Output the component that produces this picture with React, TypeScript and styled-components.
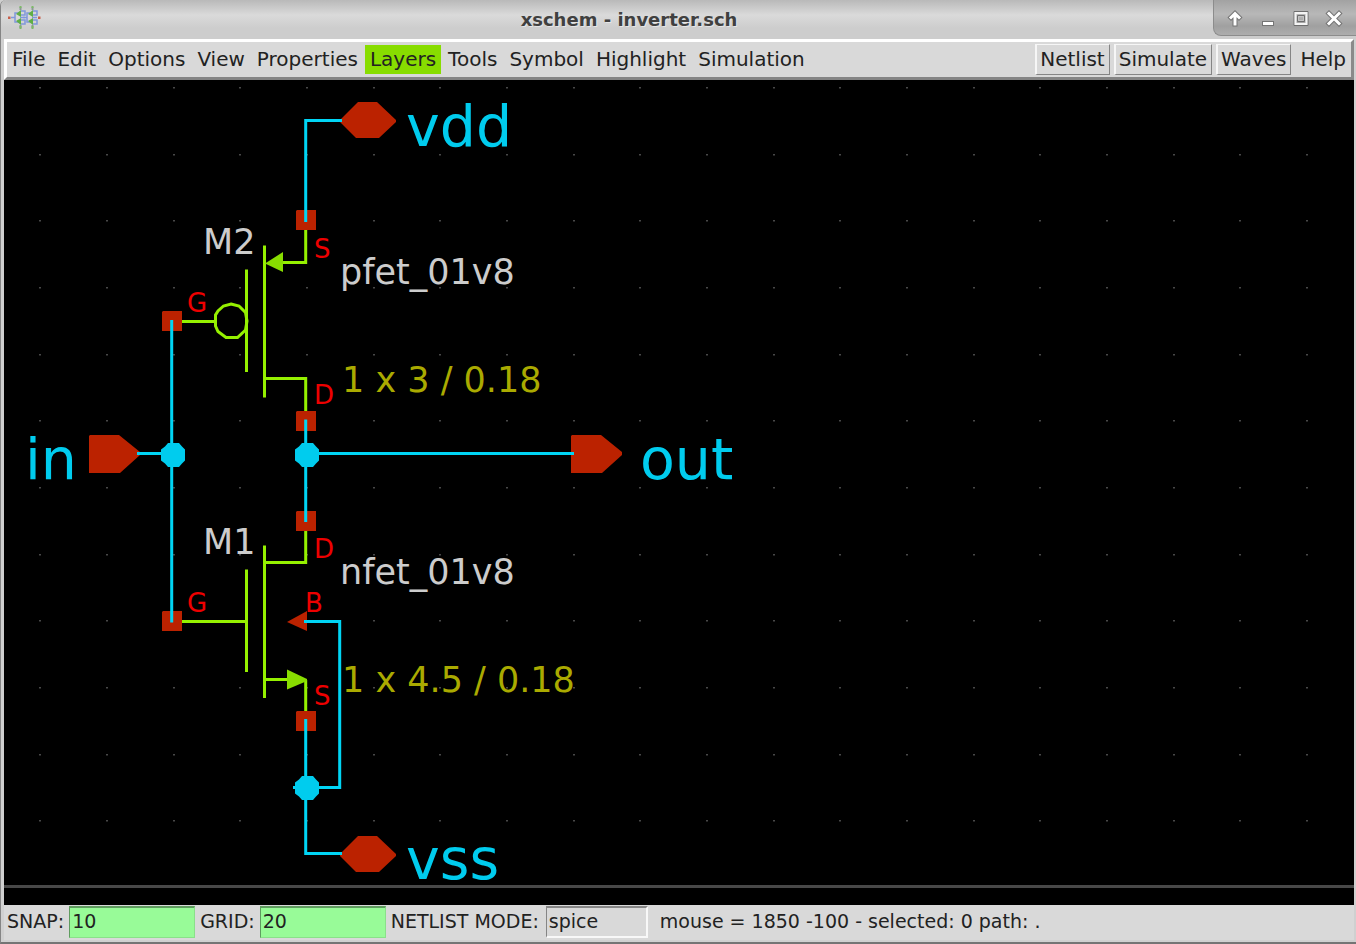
import React from "react";
import styled, { createGlobalStyle } from "styled-components";

const GlobalStyle = createGlobalStyle`
  * { box-sizing: border-box; }
  body {
    margin: 0;
    background: #cfcfcf;
    font-family: "DejaVu Sans", Verdana, sans-serif;
    font-size: 19px;
    line-height: 24px;
    color: #222;
  }
`;

const Window = styled.div`
  display: flex;
  flex-direction: column;
  min-height: 100vh;
  background: #d0d0d0;
  border-bottom: 2px solid #747474;
  border-left: 1px solid #858585;
  border-top-left-radius: 6px;
`;

const TitleBar = styled.header`
  display: grid;
  grid-template-columns: 44px 1fr 143px;
  height: 39px;
  border-top-left-radius: 6px;
  background: linear-gradient(#b9b9b9 0, #dadada 15px, #cdcdcd 28px, #cdcdcd 39px);
`;

const AppIcon = styled.svg`
  margin: 5px 0 0 6px;
`;

const Title = styled.h1`
  margin: 0;
  text-align: center;
  font-size: 18px;
  font-weight: bold;
  line-height: 40px;
  color: #404040;
  text-shadow: 1px 1px 0 #e6e6e6;
`;

const WindowButtons = styled.div`
  display: flex;
  align-items: center;
  gap: 1px;
  height: 36px;
  padding-left: 5px;
  border: solid #8c8c8c;
  border-width: 0 0 1px 1px;
  border-bottom-left-radius: 8px;
  background: linear-gradient(#a2a2a2, #b8b8b8 14px, #a0a0a0 26px, #adadad);
`;

const WindowButton = styled.button`
  display: flex;
  justify-content: center;
  align-items: center;
  width: 32px;
  height: 34px;
  padding: 0;
  border: 0;
  background: none;
`;

const Content = styled.div`
  flex: 1;
  display: flex;
  flex-direction: column;
  margin: 0 2px 2px 3px;
  background: #d9d9d9;
`;

const MenuBar = styled.nav`
  display: flex;
  align-items: center;
  gap: 2px;
  height: 41px;
  border: 3px solid;
  border-color: #fff #8a8a8a #858585 #fff;
  font-size: 20px;
`;

const MenuButton = styled.button<{ $active?: boolean }>`
  height: 29px;
  padding: 0 5px;
  border: 0;
  font: inherit;
  line-height: 27px;
  color: inherit;
  background: ${(p) => (p.$active ? "#88dd00" : "transparent")};
`;

const Actions = styled.div`
  display: flex;
  align-items: center;
  gap: 4px;
  margin-left: auto;
`;

const ActionButton = styled.button`
  height: 31px;
  padding: 0 4px 2px 3px;
  border: solid;
  border-color: #f6f6f6 #858585 #858585 #f6f6f6;
  border-width: 1px 1px 1px 2px;
  font: inherit;
  line-height: 26px;
  color: inherit;
  background: #d9d9d9;
`;

const Canvas = styled.main`
  flex: 1;
  display: flex;
  flex-direction: column;
  min-height: 600px;
  padding-bottom: 17px;
  background: #000;
`;

const Drawing = styled.svg`
  flex: 1;
  width: 100%;
  min-height: 0;
  overflow: visible;
  border-bottom: 3px solid #484848;
`;

const StatusBar = styled.footer`
  display: flex;
  align-items: center;
  height: 35px;
  padding: 0 0 1px 3px;
  line-height: 30px;
  white-space: nowrap;
`;

const StatusLabel = styled.label`
  margin-right: 5px;
  padding-bottom: 2px;
`;

const StatusText = styled.span`
  padding-bottom: 2px;
`;

const StatusInput = styled.input<{ $wide?: boolean }>`
  width: ${(p) => (p.$wide ? 126 : 102)}px;
  height: 32px;
  margin: ${(p) => (p.$wide ? "0 5px 0 0" : "0 12px 0 2px")};
  padding: ${(p) => (p.$wide ? "0 2px 4px" : "0 2px 2px")};
  border: solid;
  border-color: ${(p) =>
    p.$wide ? "#5f9c5f #8ae08a #8ae08a #5f9c5f" : "#858585 #f8f8f8 #f8f8f8 #858585"};
  border-width: ${(p) => (p.$wide ? "2px 1px 1px 1px" : "2px 2px 2px 1px")};
  border-radius: 0;
  font: inherit;
  line-height: 24px;
  color: inherit;
  background: ${(p) => (p.$wide ? "#98fb98" : "#d9d9d9")};
  outline: 0;
`;

const Wire = styled.path`
  fill: none;
  stroke: #00d5f5;
  stroke-width: 3px;
`;

const Device = styled.path`
  fill: none;
  stroke: #95f000;
  stroke-width: 3px;
`;

const DeviceFill = styled.path`
  fill: #88dd00;
`;

const PinFill = styled.path`
  fill: #bb2200;
`;

const NetLabel = styled.text`
  font-size: 57px;
  fill: #00ccee;
`;

const DeviceLabel = styled.text`
  font-size: 35px;
  fill: #cccccc;
`;

const SizeLabel = styled(DeviceLabel)`
  fill: #aaaa00;
`;

const TerminalLabel = styled.text`
  font-size: 26px;
  fill: #ee0000;
`;

const menus = ["File", "Edit", "Options", "View", "Properties", "Layers", "Tools", "Symbol", "Highlight", "Simulation"];
const actions = ["Netlist", "Simulate", "Waves"];

const GRID_STEP = 66.67;

const GridDots = () => (
  <g fill="#484848">
    {Array.from({ length: 12 }, (_, row) =>
      Array.from({ length: 20 }, (_, col) => (
        <rect
          key={`${row}-${col}`}
          x={Math.round(39.4 + col * GRID_STEP)}
          y={Math.round(87 + row * GRID_STEP)}
          width="2"
          height="1.5"
        />
      ))
    )}
  </g>
);

const Terminal = ({ x, y }: { x: number; y: number }) => (
  <PinFill d={`M${x - 9} ${y - 10}h19v20h-20v-19z`} />
);

const Junction = ({ x, y }: { x: number; y: number }) => (
  <path
    fill="#00ccee"
    d={`M${x - 5} ${y - 12}h11l3 3.500l3 3v11l-3 3l-3 3.500h-11l-3 -3.500l-4 -3v-11l4 -3z`}
  />
);

const PowerPin = ({ y }: { y: number }) => (
  <PinFill d={`M340 ${y - 1}L358 ${y - 19}H377L396 ${y - 1}V${y + 1}L379 ${y + 17}H356L340 ${y + 1}z`} />
);

const SignalPin = ({ x }: { x: number }) => (
  <PinFill d={`M${x} 436l1 -1h29l21 17v3l-20 18h-31z`} />
);

const Schematic = () => (
  <Drawing role="img" aria-label="Inverter schematic">
    <g transform="translate(-4 -80)">
      <GridDots />

      <Device d="M305.7 230V262.5H283M264.5 245.5V397.5M246.5 269.5V372M182 321.5H215M264.5 378.5H305.7V411" />
      <Device d="M231 304L239 306L245.500 312.500L247 321L245.500 330L237.500 337.500H226L218 331.500L215.500 326V315L218 311L223.500 306z" />
      <DeviceFill d="M265 263.500L283 252V272z" />

      <Device d="M305.7 531V562.5H264.5M264.5 545.5V698M246.5 569.5V672M182 621.5H246.5M264.5 679.500H290M305.7 680V711" />
      <DeviceFill d="M287 669.500L307 679V681L287 689.500z" />

      <Terminal x={306} y={220} />
      <Terminal x={306} y={421} />
      <Terminal x={306} y={521} />
      <Terminal x={306} y={721} />
      <Terminal x={172} y={321} />
      <Terminal x={172} y={621} />
      <PowerPin y={121} />
      <PowerPin y={855} />
      <SignalPin x={89} />
      <SignalPin x={571} />
      <PinFill d="M287 622L307 611V631z" />

      <Wire d="M342 120.500H305.7V222M305.7 419.500V522M171.7 320V622.500M137 453.500H172M307 453.500H574M304 621.500H339.7V787.500H293M305.7 719V853.500H342" />
      <Junction x={173} y={455} />
      <Junction x={307} y={455} />
      <Junction x={307} y={788} />

      <NetLabel x="406" y="146">vdd</NetLabel>
      <NetLabel x="406" y="879">vss</NetLabel>
      <NetLabel x="25" y="479">in</NetLabel>
      <NetLabel x="640" y="479">out</NetLabel>

      <DeviceLabel x="203" y="254">M2</DeviceLabel>
      <DeviceLabel x="340" y="284">pfet_01v8</DeviceLabel>
      <SizeLabel x="342" y="392">1 x 3 / 0.18</SizeLabel>
      <DeviceLabel x="203" y="554">M1</DeviceLabel>
      <DeviceLabel x="340" y="584">nfet_01v8</DeviceLabel>
      <SizeLabel x="342" y="692">1 x 4.5 / 0.18</SizeLabel>

      <TerminalLabel x="314" y="258">S</TerminalLabel>
      <TerminalLabel x="187" y="312">G</TerminalLabel>
      <TerminalLabel x="314" y="404">D</TerminalLabel>
      <TerminalLabel x="314" y="558">D</TerminalLabel>
      <TerminalLabel x="187" y="612">G</TerminalLabel>
      <TerminalLabel x="305" y="612">B</TerminalLabel>
      <TerminalLabel x="314" y="705">S</TerminalLabel>
    </g>
  </Drawing>
);

const Logo = () => (
  <AppIcon width="34" height="26" viewBox="0 0 34 26" aria-hidden="true">
    {[0, 12].map((dx) => (
      <g key={dx} transform={`translate(${dx} 0)`} fill="none">
        <path stroke="#7f97dc" strokeWidth="1.500" d="M4 12.500H8M12 8H8V17H12M13 12.500H18M14 6H18V10H14M14 15H18V19H14" />
        <path stroke="#8a9a94" strokeWidth="2" d="M13.500 2V5M13.500 20V23" />
        <path stroke="#7dbb66" strokeWidth="2" d="M13.500 1V3M13.500 21V24" />
        <path fill="#5fae45" d="M9 9L14 5V12zM9 16L14 13V20z" />
      </g>
    ))}
    <path fill="#c8604c" d="M1 11.500h2.500v2.500h-2.500zM31 11.500h2.500v2.500h-2.500z" />
  </AppIcon>
);

const glyphs = [
  { name: "Shade", d: "M9 15V6M5 8.500L9 4.500L13 8.500" },
  { name: "Minimize", d: "M5.500 14.500H12.500" },
  { name: "Maximize", d: "" },
  { name: "Close", d: "M4 4.500L14 14.500M14 4.500L4 14.500" },
];

const Glyph = ({ name, d }: { name: string; d: string }) =>
  name === "Maximize" ? (
    <svg width="18" height="18" viewBox="0 0 18 18" fill="none" aria-hidden="true">
      <path d="M2 2.500H16V16.500H2z" stroke="#6e6e6e" />
      <path d="M3.500 4H14.500V15H3.500z" stroke="#f4f4f4" strokeWidth="2" />
      <path d="M5.500 6.500H12.500V12.500H5.500z" stroke="#6e6e6e" />
      <path d="M6.500 7.500H11.500V11.500H6.500z" stroke="#c4c4c4" />
    </svg>
  ) : (
    <svg width="18" height="18" viewBox="0 0 18 18" fill="none" aria-hidden="true">
      <path d={d} stroke="#757575" strokeWidth="5" strokeLinecap="square" />
      <path d={d} stroke="#fff" strokeWidth="3" strokeLinecap="square" />
    </svg>
  );

export default function App() {
  return (
    <Window>
      <GlobalStyle />
      <TitleBar>
        <Logo />
        <Title>xschem - inverter.sch</Title>
        <WindowButtons>
          {glyphs.map((g) => (
            <WindowButton key={g.name} type="button" aria-label={g.name}>
              <Glyph {...g} />
            </WindowButton>
          ))}
        </WindowButtons>
      </TitleBar>
      <Content>
        <MenuBar>
          {menus.map((m) => (
            <MenuButton key={m} type="button" $active={m === "Layers"}>
              {m}
            </MenuButton>
          ))}
          <Actions>
            {actions.map((a) => (
              <ActionButton key={a} type="button">
                {a}
              </ActionButton>
            ))}
            <MenuButton type="button">Help</MenuButton>
          </Actions>
        </MenuBar>
        <Canvas>
          <Schematic />
        </Canvas>
        <StatusBar>
          <StatusLabel htmlFor="snap">SNAP:</StatusLabel>
          <StatusInput id="snap" $wide defaultValue="10" />
          <StatusLabel htmlFor="grid">GRID:</StatusLabel>
          <StatusInput id="grid" $wide defaultValue="20" />
          <StatusLabel htmlFor="mode">NETLIST MODE:</StatusLabel>
          <StatusInput id="mode" defaultValue="spice" />
          <StatusText>mouse = 1850 -100 - selected: 0 path: .</StatusText>
        </StatusBar>
      </Content>
    </Window>
  );
}
